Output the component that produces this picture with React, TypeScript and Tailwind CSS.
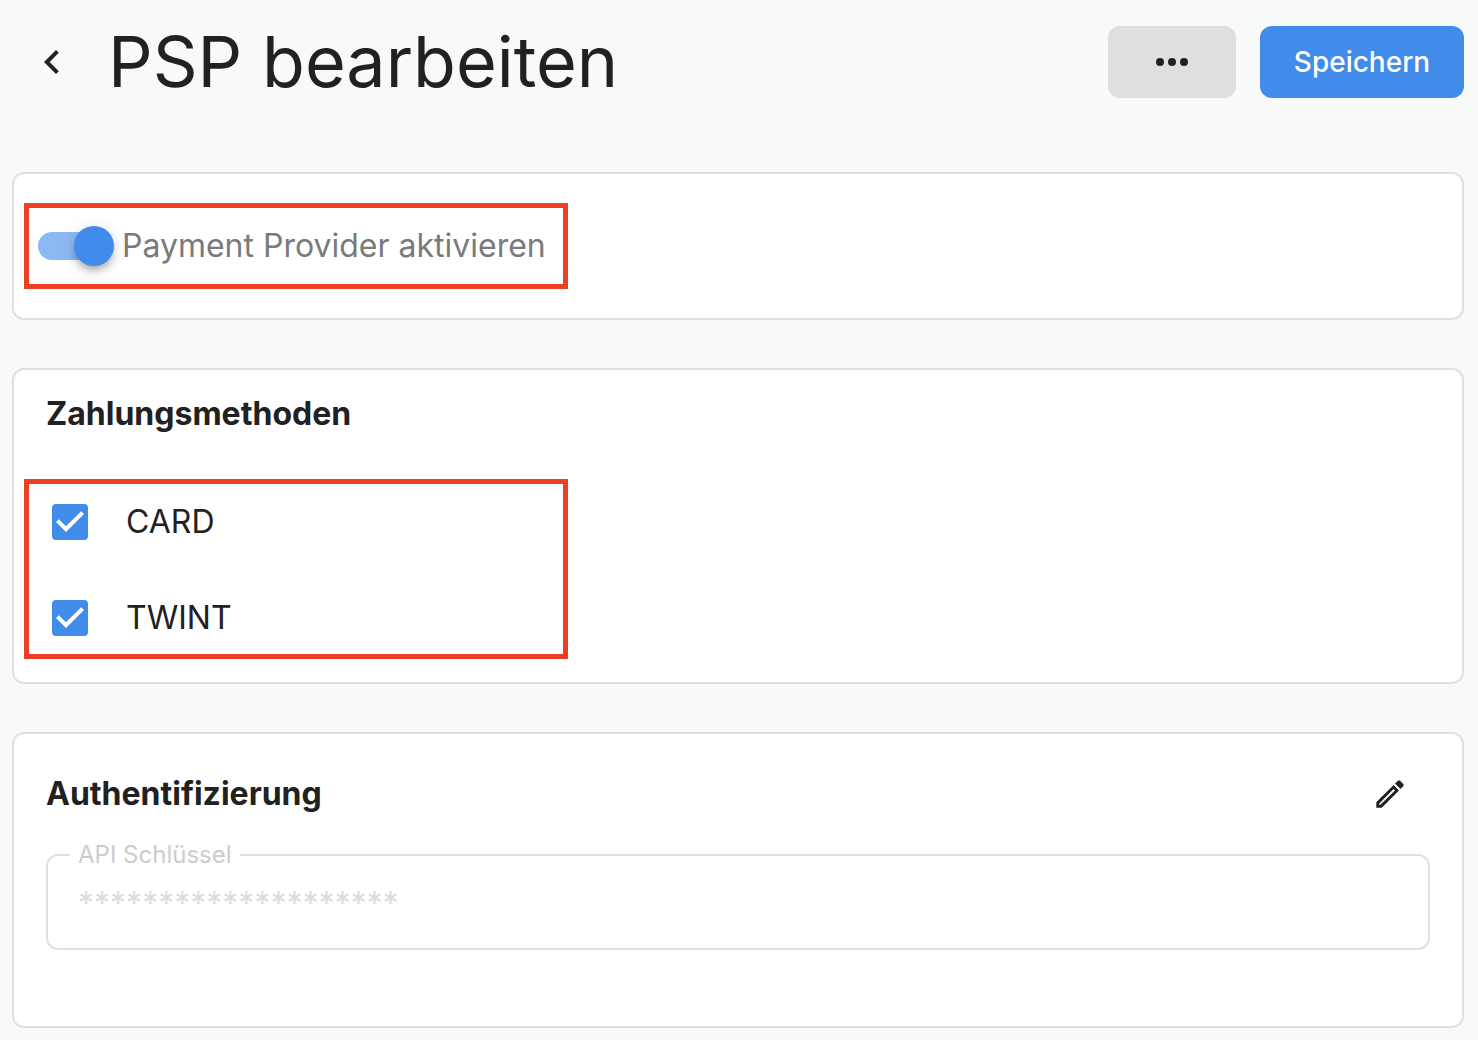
import { useState } from "react";

const paymentMethods = ["CARD", "TWINT"];

const Highlight = ({ className, children }: { className: string; children: React.ReactNode }) => {
  return (
    <div className={`w-[544px] max-w-full border-[5px] border-[#ec4025] ${className}`}>
      {children}
    </div>
  );
};

const MethodCheckbox = ({ name }: { name: string }) => {
  const [checked, setChecked] = useState(true);

  return (
    <label className="flex h-9 items-center gap-[38px] text-[32px] leading-9">
      <span className="grid size-9 shrink-0">
        <input
          type="checkbox"
          checked={checked}
          onChange={(e) => setChecked(e.target.checked)}
          className="peer col-start-1 row-start-1 size-9 appearance-none rounded border-4 border-[#757575] checked:border-0 checked:bg-[#418bea]"
        />
        <svg
          viewBox="3 3 18 18"
          className="pointer-events-none invisible col-start-1 row-start-1 size-9 fill-white peer-checked:visible"
        >
          <path d="M10 17l-5-5 1.41-1.41L10 14.17l7.59-7.59L19 8z" />
        </svg>
      </span>
      {name}
    </label>
  );
};

const App = () => {
  const [active, setActive] = useState(true);

  return (
    <div className="min-h-screen bg-[#f8f9fb] pb-3 font-[Inter,sans-serif] text-[#212121]">
      <header className="flex h-[148px] items-start justify-between bg-[#f8faf9] pt-[26px] pr-[14px] pl-7">
        <div className="flex h-[72px] items-center gap-8">
          <button type="button" aria-label="Zurück">
            <svg viewBox="0 0 24 24" className="size-12 fill-current">
              <path d="M15.41 7.41 14 6l-6 6 6 6 1.41-1.41L10.83 12z" />
            </svg>
          </button>
          <h1 className="text-[70px] leading-[72px]">PSP bearbeiten</h1>
        </div>
        <div className="flex gap-6">
          <button
            type="button"
            aria-label="Mehr"
            className="flex h-[72px] w-32 items-center justify-center rounded-xl bg-[#dee0df]"
          >
            <svg viewBox="0 0 24 24" className="size-12 fill-current">
              <circle cx="6" cy="12" r="2" />
              <circle cx="12" cy="12" r="2" />
              <circle cx="18" cy="12" r="2" />
            </svg>
          </button>
          <button
            type="button"
            className="h-[72px] w-[204px] rounded-xl bg-[#418bea] text-[28px] font-medium text-white"
          >
            Speichern
          </button>
        </div>
      </header>

      <main className="flex flex-col gap-12 pt-6 pr-[14px] pl-3">
        <section className="rounded-xl border-2 border-[#dfe0e0] bg-white px-[10px] py-[29px]">
          <Highlight className="flex h-[86px] items-center pl-[9px]">
            <label className="flex items-center gap-4 text-[32px] leading-10 text-[#7a7a7a]">
              <input
                type="checkbox"
                role="switch"
                checked={active}
                onChange={(e) => setActive(e.target.checked)}
                className="flex h-7 w-[68px] shrink-0 appearance-none items-center rounded-full bg-[#9e9e9e] before:size-10 before:shrink-0 before:rounded-full before:bg-white before:shadow-[0_6px_6px_-4px_rgb(0_0_0/0.2),0_6px_8px_rgb(0_0_0/0.14),0_2px_16px_rgb(0_0_0/0.12)] checked:bg-[#8db9f3] checked:before:ml-9 checked:before:bg-[#418bea]"
              />
              Payment Provider aktivieren
            </label>
          </Highlight>
        </section>

        <section className="rounded-xl border-2 border-[#dfe0e0] bg-white px-[10px] pt-6 pb-[23px]">
          <h2 className="pl-[22px] text-[32px] leading-10 font-bold">Zahlungsmethoden</h2>
          <Highlight className="mt-[45px] flex flex-col gap-[60px] pt-5 pb-[18px] pl-[23px]">
            {paymentMethods.map((name) => (
              <MethodCheckbox key={name} name={name} />
            ))}
          </Highlight>
        </section>

        <section className="rounded-xl border-2 border-[#dfe0e0] bg-white px-8 pt-10 pb-[76px]">
          <div className="flex items-center justify-between">
            <h2 className="text-[32px] leading-10 font-bold">Authentifizierung</h2>
            <button type="button" aria-label="Bearbeiten" className="mr-6 p-[2px]">
              <svg viewBox="0 0 28 28" className="size-7 fill-current">
                <path
                  fillRule="evenodd"
                  d="M0.3 22.3 17.6 5 23 10.4 5.7 27.7H0.3zM3.3 23.6V24.7H4.4L19 10.4 17.6 9z"
                />
                <path d="M19 3.6 21.7.9Q23 -.3 24.3.9L27.1 3.7Q28.3 5 27.1 6.3L24.4 9z" />
              </svg>
            </button>
          </div>
          <fieldset className="mt-6 h-[112px] rounded-xl border-2 border-[#dfe0e0] px-[22px]">
            <legend className="px-2 text-2xl leading-[34px] text-[#cccccc]">
              <label htmlFor="api-key">API Schlüssel</label>
            </legend>
            <input
              id="api-key"
              type="text"
              disabled
              defaultValue="********************"
              className="h-[62px] w-full px-2 text-[32px] text-[#dcdcdc]"
            />
          </fieldset>
        </section>
      </main>
    </div>
  );
};

export default App;
